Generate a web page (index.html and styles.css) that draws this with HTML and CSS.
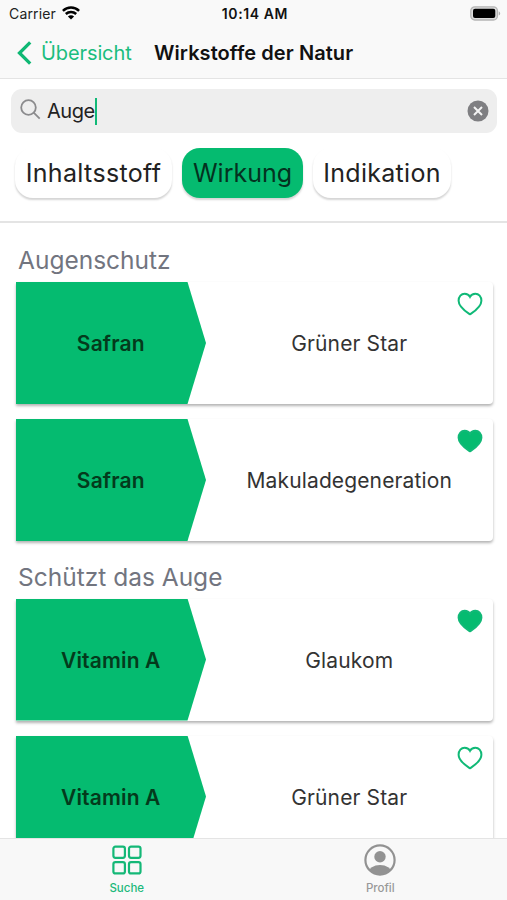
FILE: index.html
```html
<!DOCTYPE html>
<html lang="de">
<head>
<meta charset="utf-8">
<title>Wirkstoffe der Natur</title>
<link rel="stylesheet" href="styles.css">
</head>
<body>
<svg class="defs" width="0" height="0" aria-hidden="true">
  <symbol id="heart" viewBox="0 0 26 24">
    <path d="M13 22.300C10.800 20.700 1.600 15.500 1.600 8.700C1.600 4.700 4.300 1.700 7.600 1.700C10 1.700 12 2.800 13 4.800C14 2.800 16 1.700 18.400 1.700C21.700 1.700 24.400 4.700 24.400 8.700C24.400 15.500 15.200 20.700 13 22.300Z"/>
  </symbol>
</svg>
<div class="app">
  <header class="header">
    <div class="status">
      <div class="carrier"><span>Carrier</span>
        <svg width="18" height="14" viewBox="0 0 18 14" fill="none" stroke="#000" stroke-width="2.500"><path d="M.9 4.900C5.500.5 12.500.5 17.100 4.900M3.800 8C6.800 5.200 11.200 5.200 14.200 8"/><path d="M9 13.600L5.900 10.400C7.700 8.900 10.300 8.900 12.100 10.400Z" fill="#000" stroke="none"/></svg>
      </div>
      <div class="time">10:14 AM</div>
      <svg class="battery" width="31" height="15" viewBox="0 0 31 15"><rect x=".8" y=".8" width="26.600" height="13.200" rx="4" fill="#ddd" stroke="#b5b5b5" stroke-width="1.300"/><rect x="3" y="2.800" width="22.300" height="9.200" rx="2" fill="#000"/><path d="M28.700 5.200c2 .8 2 3.600 0 4.400Z" fill="#b0b0b0"/></svg>
    </div>
    <nav class="navbar">
      <svg class="back" width="15" height="24" viewBox="0 0 15 24" fill="none" stroke="#0fb874" stroke-width="3.300"><path d="M13.200 1.300L2.500 12L13.200 22.700"/></svg>
      <span class="back-label">Übersicht</span>
      <h1>Wirkstoffe der Natur</h1>
    </nav>
  </header>
  <section class="filters">
    <div class="search">
      <svg width="21" height="21" viewBox="0 0 21 21" fill="none" stroke="#8b8b8d" stroke-width="1.800"><circle cx="8.500" cy="8.500" r="7.300"/><path d="M13.700 13.700L19.700 19.700"/></svg>
      <span class="query">Auge</span><i class="caret"></i>
      <svg class="clear" width="22" height="22" viewBox="0 0 22 22"><circle cx="11" cy="11" r="10.500" fill="#7f7f82"/><path d="M7 7L15 15M15 7L7 15" stroke="#f4f4f4" stroke-width="2"/></svg>
    </div>
    <div class="chips">
      <span class="chip chip-a">Inhaltsstoff</span>
      <span class="chip chip-b active">Wirkung</span>
      <span class="chip chip-c">Indikation</span>
    </div>
  </section>
  <main class="results">
    <h2>Augenschutz</h2>
    <article class="card">
      <div class="agent">Safran</div>
      <div class="effect">Grüner Star</div>
      <svg class="heart"><use href="#heart"/></svg>
    </article>
    <article class="card">
      <div class="agent">Safran</div>
      <div class="effect">Makuladegeneration</div>
      <svg class="heart full"><use href="#heart"/></svg>
    </article>
    <h2>Schützt das Auge</h2>
    <article class="card">
      <div class="agent">Vitamin A</div>
      <div class="effect">Glaukom</div>
      <svg class="heart full"><use href="#heart"/></svg>
    </article>
    <article class="card">
      <div class="agent">Vitamin A</div>
      <div class="effect">Grüner Star</div>
      <svg class="heart"><use href="#heart"/></svg>
    </article>
  </main>
  <footer class="tabs">
    <div class="tab selected">
      <svg width="32" height="32" viewBox="0 0 32 32" fill="none" stroke="#14b877" stroke-width="2.200"><rect x="2.400" y="2.600" width="11.500" height="11.200" rx="2"/><rect x="18" y="2.600" width="11.500" height="11.200" rx="2"/><rect x="2.400" y="18.200" width="11.500" height="11.200" rx="2"/><rect x="18" y="18.200" width="11.500" height="11.200" rx="2"/></svg>
      <span>Suche</span>
    </div>
    <div class="tab">
      <svg width="32" height="32" viewBox="0 0 32 32"><clipPath id="disc"><circle cx="16" cy="16" r="14.500"/></clipPath><circle cx="16" cy="16" r="14.600" fill="none" stroke="#929292" stroke-width="2.200"/><circle cx="16" cy="12.800" r="5.700" fill="#929292"/><ellipse cx="16" cy="28.500" rx="11.500" ry="7.500" fill="#929292" clip-path="url(#disc)"/></svg>
      <span>Profil</span>
    </div>
  </footer>
</div>
</body>
</html>
```
FILE: styles.css
```css
* { box-sizing: border-box; }
body { margin: 0; background: #fff; font-family: Inter, "Liberation Sans", sans-serif; color: #222; }
h1, h2 { margin: 0; }
svg { display: block; flex: none; }
.defs { position: absolute; }
.app { width: 507px; height: 900px; display: flex; flex-direction: column; overflow: hidden; }
.header { height: 79px; flex: none; background: #f9f9f9; border-bottom: 1px solid #e4e4e4; }
.status { height: 27px; padding: 0 6px 0 9px; display: grid; grid-template-columns: 1fr auto 1fr; align-items: center; font-size: 14px; line-height: 27px; }
.carrier { display: flex; align-items: center; gap: 6px; letter-spacing: .15px; }
.carrier svg { margin-top: -1px; }
.time { font-weight: 600; color: #111; letter-spacing: .6px; }
.battery { justify-self: end; }
.navbar { height: 51px; display: flex; align-items: center; padding-left: 17px; font-size: 20px; line-height: 50px; white-space: nowrap; }
.back-label { color: #1bbd7e; margin-left: 9px; width: 113px; letter-spacing: -.1px; }
.navbar h1 { font-size: 20px; font-weight: 600; color: #111; letter-spacing: .08px; }
.filters { height: 144px; flex: none; padding: 10px 10px 0 11px; border-bottom: 2px solid #e4e4e4; }
.search { height: 44px; border-radius: 11px; background: #eee; display: flex; align-items: center; padding: 0 8px 0 9px; }
.search > svg:first-child { margin-top: -3px; }
.query { font-size: 20px; margin-left: 6px; letter-spacing: -.5px; }
.caret { width: 2.5px; height: 27px; background: #10b977; }
.clear { margin-left: auto; }
.chips { display: flex; gap: 10px; padding: 15px 0 0 4px; }
.chip { height: 50px; border-radius: 18px; line-height: 50px; font-size: 25px; text-align: center; box-shadow: 0 2px 2px -.5px rgba(0,0,0,.17); white-space: nowrap; }
.chip-a { width: 157px; letter-spacing: .35px; }
.chip-b { width: 121px; }
.chip-c { width: 138px; letter-spacing: .3px; }
.active { background: #05bb70; color: #04321f; }
.results { flex: 1; min-height: 0; overflow: hidden; padding: 22px 14px 0 15.500px; }
h2 { font-size: 24.5px; font-weight: 400; color: #72757f; line-height: 31px; padding-left: 2.500px; height: 37px; white-space: nowrap; }
.card { position: relative; display: flex; width: 477px; height: 122px; margin-bottom: 15px; border-radius: 0 4px 4px 0; background: #fff; box-shadow: 0 2px 3px rgba(0,0,0,.3); }
.card + h2 { margin-top: 20.500px; }
.agent { width: 190.500px; background: #05bb70; clip-path: polygon(0 0, 172px 0, 100% 50%, 172px 100%, 0 100%); display: grid; place-items: center; padding-top: 1px; font-size: 21px; font-weight: 600; letter-spacing: .15px; color: #043a1c; }
.effect { flex: 1; display: grid; place-items: center; padding-top: 1px; font-size: 21px; letter-spacing: .13px; color: #333; }
.heart { position: absolute; right: 9.500px; top: 10px; width: 26px; height: 24px; fill: none; stroke: #10b977; stroke-width: 2; }
.heart.full { fill: #05bb70; }
.tabs { height: 62px; flex: none; background: #f8f8f8; border-top: 1px solid #e4e4e4; display: grid; grid-template-columns: 1fr 1fr; }
.tab { display: flex; flex-direction: column; align-items: center; padding-top: 5px; font-size: 11.5px; font-weight: 500; line-height: 15px; color: #999; gap: 5px; }
.selected { color: #1cb87b; }
```
